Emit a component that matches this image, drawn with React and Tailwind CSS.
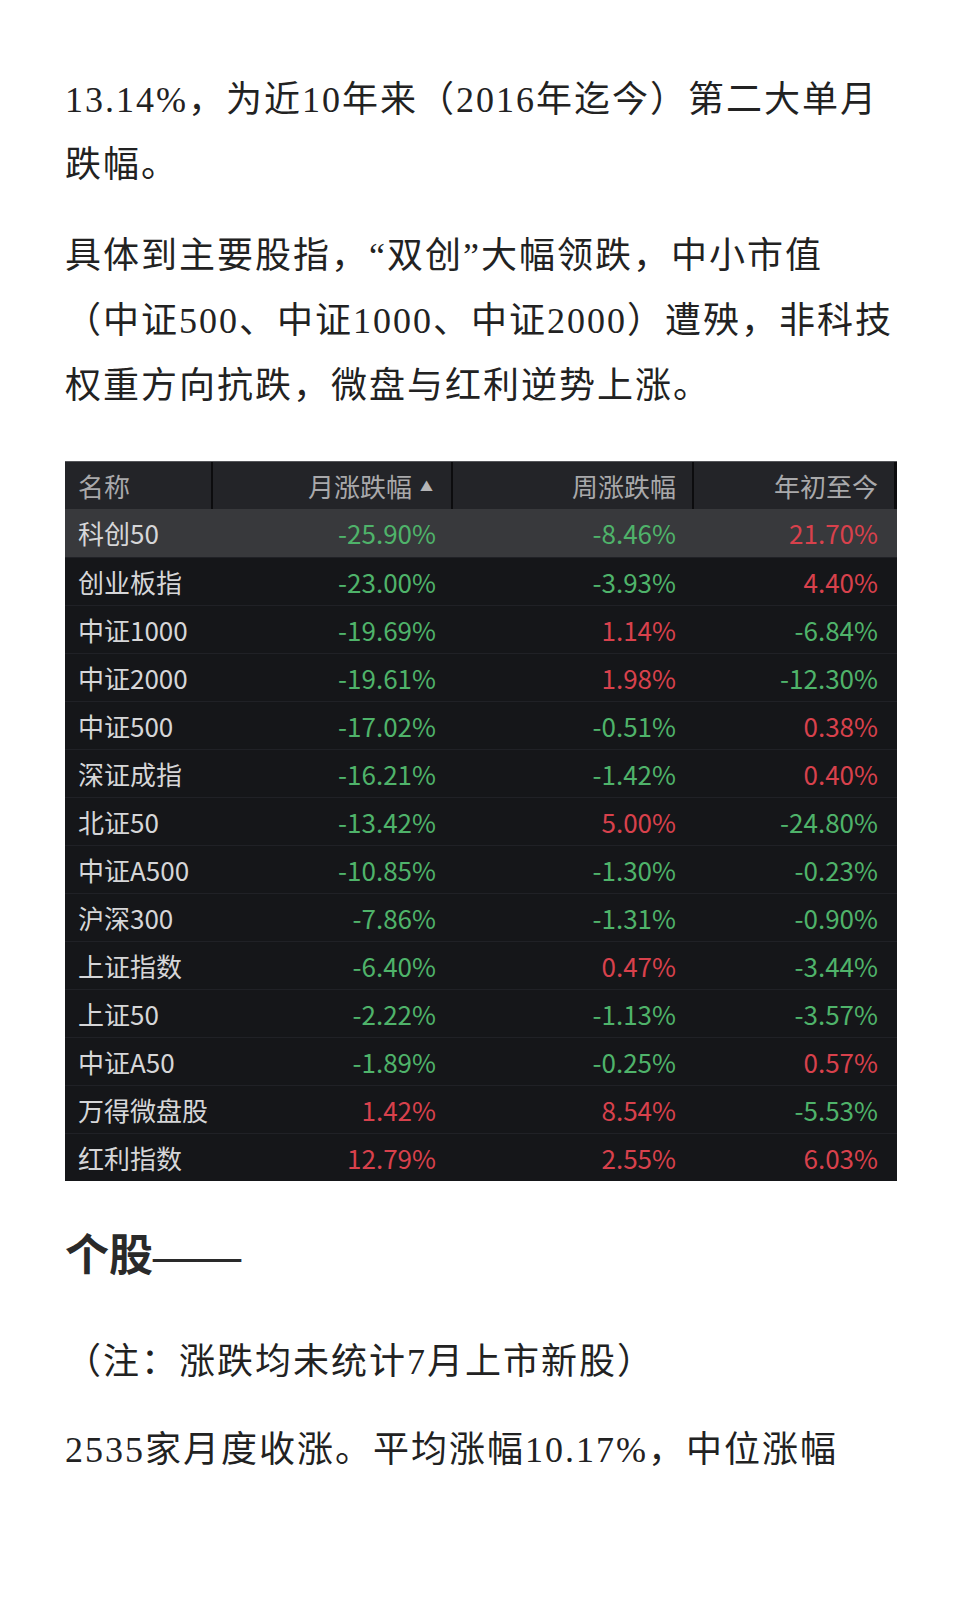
const rows = [
  ['科创50', '-25.90%', '-8.46%', '21.70%'],
  ['创业板指', '-23.00%', '-3.93%', '4.40%'],
  ['中证1000', '-19.69%', '1.14%', '-6.84%'],
  ['中证2000', '-19.61%', '1.98%', '-12.30%'],
  ['中证500', '-17.02%', '-0.51%', '0.38%'],
  ['深证成指', '-16.21%', '-1.42%', '0.40%'],
  ['北证50', '-13.42%', '5.00%', '-24.80%'],
  ['中证A500', '-10.85%', '-1.30%', '-0.23%'],
  ['沪深300', '-7.86%', '-1.31%', '-0.90%'],
  ['上证指数', '-6.40%', '0.47%', '-3.44%'],
  ['上证50', '-2.22%', '-1.13%', '-3.57%'],
  ['中证A50', '-1.89%', '-0.25%', '0.57%'],
  ['万得微盘股', '1.42%', '8.54%', '-5.53%'],
  ['红利指数', '12.79%', '2.55%', '6.03%'],
]

const tone = (v) => (v.startsWith('-') ? 'text-[#4fb36a]' : 'text-[#d8414c]')

const IndexTable = () => (
  <div className="mt-[42px] w-[832px] bg-[#151619] font-['Noto_Sans_CJK_SC',sans-serif] text-[26px] leading-none tracking-normal">
    {/* header */}
    <div className="grid h-[48px] grid-cols-[148px_240px_241px_203px] border-t border-[#55565a] bg-[#232428] text-[#a9a9ab]">
      <div className="flex items-center border-r-2 border-[#0c0c0e] pl-[13px]">名称</div>
      <div className="flex items-center justify-end gap-[8px] border-r-2 border-[#0c0c0e] pr-[18px]">
        <span>月涨跌幅</span>
        <span className="text-[13px] text-[#b5b5b7]">▲</span>
      </div>
      <div className="flex items-center justify-end border-r-2 border-[#0c0c0e] pr-[16px]">周涨跌幅</div>
      <div className="flex items-center justify-end border-r-[3px] border-[#0c0c0e] pr-[16px]">年初至今</div>
    </div>

    {/* rows */}
    {rows.map((r, i) => (
      <div
        key={r[0]}
        className={`grid h-[48px] grid-cols-[148px_240px_241px_203px] items-center ${
          i === 0 ? 'bg-[#38393c]' : 'border-t border-[#202126]'
        }`}
      >
        <div className="pl-[13px] text-[#d6d6d8]">{r[0]}</div>
        <div className={`pr-[17px] text-right ${tone(r[1])}`}>{r[1]}</div>
        <div className={`pr-[18px] text-right ${tone(r[2])}`}>{r[2]}</div>
        <div className={`pr-[19px] text-right ${tone(r[3])}`}>{r[3]}</div>
      </div>
    ))}
  </div>
)

export default function App() {
  return (
    <div
      lang="zh-CN"
      className="min-h-[1600px] bg-white pl-[65px] pt-[68px] font-['Liberation_Serif','Noto_Sans_CJK_SC',serif] text-[36px] leading-[65px] tracking-[2px] text-[#222222]"
    >
      <p className="whitespace-nowrap">
        13.14%，为近10年来（2016年迄今）第二大单月
        <br />
        跌幅。
      </p>

      <p className="mt-[26px] whitespace-nowrap">
        具体到主要股指，“双创”大幅领跌，中小市值
        <br />
        （中证500、中证1000、中证2000）遭殃，非科技
        <br />
        权重方向抗跌，微盘与红利逆势上涨。
      </p>

      <IndexTable />

      <h2 className="mt-[43px] text-[44px] font-bold leading-[66px] tracking-normal text-[#2a2a2a]">个股——</h2>

      <p className="mt-[40px] whitespace-nowrap">（注：涨跌均未统计7月上市新股）</p>

      <p className="mt-[23px] whitespace-nowrap">2535家月度收涨。平均涨幅10.17%，中位涨幅</p>
    </div>
  )
}
